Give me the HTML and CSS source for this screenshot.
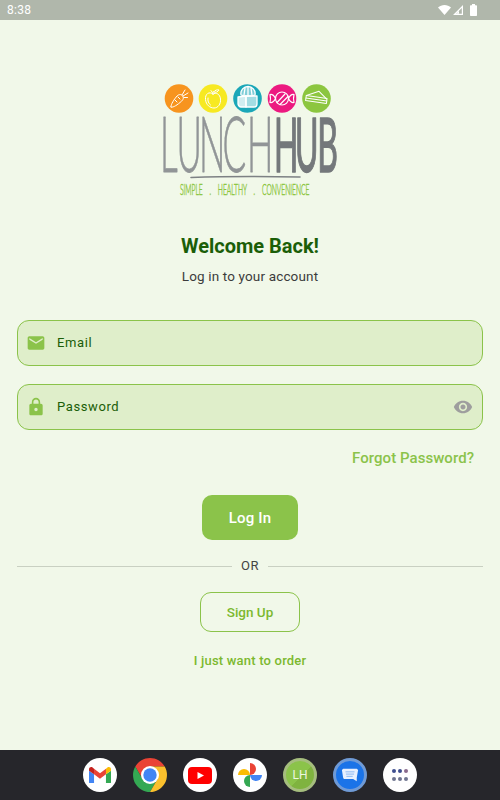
FILE: index.html
```html
<!DOCTYPE html>
<html lang="en">
<head>
  <meta charset="UTF-8">
  <meta name="viewport" content="width=device-width, initial-scale=1.0">
  <title>LunchHub - Log In</title>
  <link rel="stylesheet" href="styles.css">
</head>
<body>
  <div class="app-container">
    <!-- Status bar -->
    <header class="status-bar">
      <span class="status-time">8:38</span>
      <div class="status-icons">
        <svg width="13" height="10" viewBox="0 0 13 10"><path d="M0 2.500C1.800 0.900 4 0 6.500 0S11.200 0.900 13 2.500L6.500 10Z" fill="#fff"/></svg>
        <svg width="10" height="10" viewBox="0 0 10 10"><path fill-rule="evenodd" d="M10 0V10H0ZM8.800 3L3 8.800H8.800Z" fill="#fff"/><path d="M6 5.800V8.800H3Z" fill="#fff"/></svg>
        <svg class="status-battery" width="7" height="12" viewBox="0 0 7 12"><path d="M2 0H5V1.200H6.300C6.700 1.200 7 1.500 7 1.900V11.300C7 11.700 6.700 12 6.300 12H0.700C0.300 12 0 11.700 0 11.300V1.900C0 1.500 0.300 1.200 0.700 1.200H2Z" fill="#fff"/></svg>
      </div>
    </header>

    <main class="app-main">
      <!-- Logo -->
      <svg class="logo" width="180" height="120" viewBox="160 80 180 120">
        <circle cx="179" cy="98.500" r="14.300" fill="#f7941e"/>
        <g fill="none" stroke="#fff" stroke-width="1" stroke-linecap="round" stroke-linejoin="round">
          <path d="M171 107C170.500 106 172 102 177 96C179 94 182 94 183 96.500C184 99 182.500 100.500 180 102.500C176 106 172 108 171 107Z"/>
          <path d="M182 95L185 90M183 96L188 93M184 97.500L187.500 97.500"/>
          <path d="M175 100L177 102M178 97L180 99"/>
        </g>
        <circle cx="213" cy="98.500" r="14.300" fill="#f7e922"/>
        <g fill="none" stroke="#fff" stroke-width="1" stroke-linecap="round" stroke-linejoin="round">
          <path d="M213 94C209 91 205 94 205.500 99.500C206 105 210 108 214 108C218 108 221 104 220.500 99C220 94 216 92 213 94Z"/>
          <path d="M213 94C212.500 92.500 212 91.500 211 90.500M213.500 92C215 90 217.500 89.500 219 90C218 92 215.500 93 213.500 92Z"/>
          <path d="M208 98C207.500 101 208.500 103.500 210.500 105"/>
        </g>
        <circle cx="247.500" cy="98.500" r="14.300" fill="#1ba7b8"/>
        <g fill="none" stroke="#fff" stroke-width="1.300" stroke-linecap="round" stroke-linejoin="round">
          <path d="M241 95C240 90 244 86.500 248 86.500C252 86.500 256 90 255 95C252 96.500 244 96.500 241 95Z" fill="#fff" fill-opacity="0.45"/>
          <path d="M245 88L244 95M248 87L248 96M251 88L252 95"/>
          <path d="M238 97L246 96V107H241C239.500 107 238.500 106 238 104Z" fill="#fff" fill-opacity="0.8"/>
          <path d="M246 96L257 96V104C257 106 256 107 254 107H246Z" fill="#fff" fill-opacity="0.6"/>
        </g>
        <circle cx="282" cy="98.500" r="14.300" fill="#ec1a80"/>
        <g fill="none" stroke="#fff" stroke-width="1.200" stroke-linecap="round" stroke-linejoin="round">
          <circle cx="282" cy="98.500" r="6.500"/>
          <path d="M277 102.500L285 94M280 104.500L288 96.500"/>
          <path d="M275.500 98.500C274 95.500 272 94 270 94.500C270.500 96.500 270.500 100.500 270 102.500C272 103 274 101.500 275.500 98.500Z"/>
          <path d="M288.500 98.500C290 95.500 292 94 294 94.500C293.500 96.500 293.500 100.500 294 102.500C292 103 290 101.500 288.500 98.500Z"/>
        </g>
        <circle cx="316.500" cy="98.500" r="14.300" fill="#8cc63f"/>
        <g fill="none" stroke="#fff" stroke-width="1" stroke-linecap="round" stroke-linejoin="round" transform="rotate(8 316.500 98.500)">
          <path d="M306 97L318 91L327 98V102H306Z"/>
          <path d="M306 97H327M306 99.500H327"/>
        </g>

        <text class="logo-word" transform="translate(160 172) scale(.46 1)" x="0 36 85 136 189" y="0" font-size="76">LUNCH</text>
        <text class="logo-word logo-word-bold" transform="translate(274 172) scale(.42 1)" x="0 50 103" y="0" font-size="76">HUB</text>
        <path d="M191 177.500C220 176.500 270 176.500 300 177" fill="none" stroke="#7d8184" stroke-width="1.600" stroke-linecap="round"/>
        <text class="logo-tag" transform="translate(180 195) scale(.45 1)" font-size="15">SIMPLE . HEALTHY . CONVENIENCE</text>
      </svg>

      <h1 class="page-title">Welcome Back!</h1>
      <p class="page-subtitle">Log in to your account</p>

      <form class="login-form">
        <div class="field">
          <svg class="field-icon" width="20" height="20" viewBox="0 0 24 24"><path d="M20 4H4C2.900 4 2 4.900 2 6V18C2 19.100 2.900 20 4 20H20C21.100 20 22 19.100 22 18V6C22 4.900 21.100 4 20 4ZM20 8L12 13L4 8V6L12 11L20 6Z" fill="#8bc34a"/></svg>
          <span class="field-label">Email</span>
        </div>
        <div class="field">
          <svg class="field-icon" width="20" height="20" viewBox="0 0 24 24"><path d="M18 8H17V6C17 3.240 14.760 1 12 1S7 3.240 7 6V8H6C4.900 8 4 8.900 4 10V20C4 21.100 4.900 22 6 22H18C19.100 22 20 21.100 20 20V10C20 8.900 19.100 8 18 8ZM12 17C10.900 17 10 16.100 10 15S10.900 13 12 13S14 13.900 14 15S13.100 17 12 17ZM15.100 8H8.900V6C8.900 4.290 10.290 2.900 12 2.900S15.100 4.290 15.100 6Z" fill="#8bc34a"/></svg>
          <span class="field-label">Password</span>
          <svg class="field-eye" width="20" height="20" viewBox="0 0 24 24"><path d="M12 4.500C7 4.500 2.730 7.610 1 12C2.730 16.390 7 19.500 12 19.500S21.270 16.390 23 12C21.270 7.610 17 4.500 12 4.500ZM12 17C9.240 17 7 14.760 7 12S9.240 7 12 7S17 9.240 17 12S14.760 17 12 17ZM12 9C10.340 9 9 10.340 9 12S10.340 15 12 15S15 13.660 15 12S13.660 9 12 9Z" fill="#9e9e9e"/></svg>
        </div>
        <a class="forgot-link" href="#">Forgot Password?</a>
        <button class="btn btn-primary" type="button">Log In</button>
      </form>

      <div class="divider"><span>OR</span></div>

      <button class="btn btn-outline" type="button">Sign Up</button>
      <a class="order-link" href="#">I just want to order</a>
    </main>

    <!-- Dock -->
    <nav class="dock">
      <div class="dock-icon">
        <svg width="22" height="16.500" viewBox="0 0 24 18">
          <path d="M1.500 18H5.500V8L0 4V16.500C0 17.300 0.700 18 1.500 18Z" fill="#4285f4"/>
          <path d="M18.500 18H22.500C23.300 18 24 17.300 24 16.500V4L18.500 8Z" fill="#34a853"/>
          <path d="M18.500 2V8L24 4V2.500C24 0.500 21.700 -0.600 20.100 0.600Z" fill="#fbbc04"/>
          <path d="M5.500 8V2L12 6.900L18.500 2V8L12 12.900Z" fill="#ea4335"/>
          <path d="M0 2.500V4L5.500 8V2L3.900 0.600C2.300 -0.600 0 0.500 0 2.500Z" fill="#c5221f"/>
        </svg>
      </div>
      <div class="dock-icon dock-icon-bare">
        <svg width="34" height="34" viewBox="0 0 34 34">
          <path d="M31.700 8.500A17 17 0 0 0 2.300 8.500L9.600 21.200L17 17V8.500Z" fill="#ea4335"/>
          <path d="M2.300 8.500A17 17 0 0 0 17 34L24.400 21.200L17 17L9.600 21.200Z" fill="#34a853"/>
          <path d="M31.700 8.500A17 17 0 0 1 17 34L24.400 21.200L17 8.500Z" fill="#fbc02d"/>
          <circle cx="17" cy="17" r="9" fill="#fff"/>
          <circle cx="17" cy="17" r="6.700" fill="#4285f4"/>
        </svg>
      </div>
      <div class="dock-icon">
        <svg width="24" height="17" viewBox="0 0 24 17"><rect width="24" height="17" rx="4" fill="#f00"/><path d="M9.500 5L16 8.500L9.500 12Z" fill="#fff"/></svg>
      </div>
      <div class="dock-icon">
        <svg width="24" height="24" viewBox="0 0 24 24">
          <path d="M12 12H0A6 6 0 0 1 12 12Z" fill="#fbbc04"/>
          <path d="M12 12V0A6 6 0 0 1 12 12Z" fill="#ea4335"/>
          <path d="M12 12H24A6 6 0 0 1 12 12Z" fill="#4285f4"/>
          <path d="M12 12V24A6 6 0 0 1 12 12Z" fill="#34a853"/>
        </svg>
      </div>
      <div class="dock-icon dock-icon-lh"><span>LH</span></div>
      <div class="dock-icon dock-icon-msg">
        <svg width="18" height="18" viewBox="0 0 20 20">
          <path d="M2.500 3H17.500L19 4.500L17.500 13V17L13.500 14.500H4C3 14.500 2.500 13.500 2.300 12.500L1 4.500Z" fill="#e8f0fe"/>
          <path d="M5 6.500H15M5.500 9H14.500M6 11.500H13" stroke="#8db8f2" stroke-width="1.100"/>
        </svg>
      </div>
      <div class="dock-icon dock-icon-apps">
        <span class="dot dot-a"></span><span class="dot dot-a"></span><span class="dot dot-b"></span>
        <span class="dot dot-c"></span><span class="dot dot-c"></span><span class="dot dot-c"></span>
      </div>
    </nav>
  </div>
</body>
</html>
```

FILE: styles.css
```css
/* Base */
* {
  margin: 0;
  padding: 0;
  box-sizing: border-box;
  font-family: Roboto, "Liberation Sans", sans-serif;
}

body {
  background-color: #f1f8e9;
  color: #333;
}

a {
  text-decoration: none;
}

.app-container {
  width: 500px;
  height: 800px;
  display: flex;
  flex-direction: column;
  overflow: hidden;
}

/* Status bar */
.status-bar {
  height: 20px;
  flex-shrink: 0;
  background-color: #b0b7ab;
  color: #fff;
  display: flex;
  align-items: center;
  justify-content: space-between;
  padding: 0 23px 0 7px;
}

.status-time {
  font-size: 12px;
  letter-spacing: 0.3px;
}

.status-icons {
  display: flex;
  align-items: center;
  gap: 2px;
}

.status-battery {
  margin-left: 5px;
}

/* Main */
.app-main {
  flex: 1;
  display: flex;
  flex-direction: column;
  align-items: center;
  padding: 60px 17px 0;
}

.logo {
  display: block;
}

.logo-word {
  font-family: Lato, sans-serif;
  font-weight: 300;
  fill: #919597;
  stroke: #919597;
  stroke-width: 0.800;
  stroke-linejoin: round;
}

.logo-word-bold {
  font-weight: 400;
  fill: #74787b;
  stroke: #74787b;
  stroke-width: 1.600;
}

.logo-tag {
  font-family: Lato, sans-serif;
  font-weight: 300;
  word-spacing: 11px;
  fill: #8cc63f;
  stroke: #8cc63f;
  stroke-width: 0.500;
}

.page-title {
  margin-top: 35px;
  font-size: 20px;
  line-height: 22px;
  font-weight: 700;
  color: #1b5e08;
}

.page-subtitle {
  margin-top: 9px;
  font-size: 13.500px;
  line-height: 20px;
  letter-spacing: 0.15px;
  color: #3c3c3c;
}

/* Form */
.login-form {
  width: 100%;
  margin-top: 33.500px;
  display: flex;
  flex-direction: column;
  align-items: center;
}

.field {
  width: 100%;
  height: 46px;
  margin-bottom: 18px;
  padding: 0 9px 0 8px;
  display: flex;
  align-items: center;
  background-color: #dfeeca;
  border: 1px solid #8bc34a;
  border-radius: 12px;
}

.field-label {
  margin-left: 11px;
  font-size: 13px;
  letter-spacing: 0.6px;
  color: #1b5e08;
}

.field-eye {
  margin-left: auto;
}

.forgot-link {
  align-self: flex-end;
  margin: 0.500px 9px 0 0;
  font-size: 15px;
  line-height: 20px;
  font-weight: 500;
  letter-spacing: 0.05px;
  color: #8bc34a;
}

.btn {
  display: block;
  text-align: center;
  cursor: pointer;
  font-weight: 500;
}

.btn-primary {
  width: 96px;
  height: 45px;
  margin-top: 27px;
  border: none;
  border-radius: 10px;
  background-color: #8bc34a;
  color: #fff;
  font-size: 15px;
  letter-spacing: 0.2px;
}

.divider {
  width: 100%;
  margin-top: 18px;
  display: flex;
  align-items: center;
  gap: 9px;
  font-size: 13px;
  line-height: 16px;
  letter-spacing: 0.5px;
  color: #444;
}

.divider::before,
.divider::after {
  content: "";
  flex: 1;
  height: 1px;
  background-color: #c9d0c2;
}

.btn-outline {
  width: 100px;
  height: 40px;
  margin-top: 18px;
  border: 1px solid #8bc34a;
  border-radius: 11px;
  background-color: transparent;
  color: #7cb82f;
  font-size: 13.500px;
}

.order-link {
  margin-top: 21px;
  font-size: 13px;
  line-height: 16px;
  font-weight: 500;
  letter-spacing: 0.2px;
  color: #7cb82f;
}

/* Dock */
.dock {
  height: 50px;
  flex-shrink: 0;
  background-color: #26262b;
  display: flex;
  align-items: center;
  justify-content: center;
  gap: 16px;
}

.dock-icon {
  width: 34px;
  height: 34px;
  border-radius: 50%;
  background-color: #fff;
  display: flex;
  align-items: center;
  justify-content: center;
}

.dock-icon-bare {
  background-color: transparent;
}

.dock-icon-lh {
  background: linear-gradient(135deg, #8bc34a 55%, #7fb33f 55%);
  border: 3px solid #a5bd7e;
  color: #eef6e0;
  font-size: 12px;
}

.dock-icon-msg {
  background-color: #1a73e8;
  border: 3px solid #6f9ad6;
}

.dock-icon-apps {
  display: grid;
  grid-template-columns: repeat(3, 4px);
  grid-auto-rows: 4px;
  column-gap: 2px;
  row-gap: 3.500px;
  align-content: center;
  justify-content: center;
}

.dot {
  width: 4px;
  height: 4px;
  border-radius: 50%;
}

.dot-a {
  background-color: #3f4f8f;
}

.dot-b {
  background-color: #8a6a8c;
}

.dot-c {
  background-color: #6f7590;
}
```
